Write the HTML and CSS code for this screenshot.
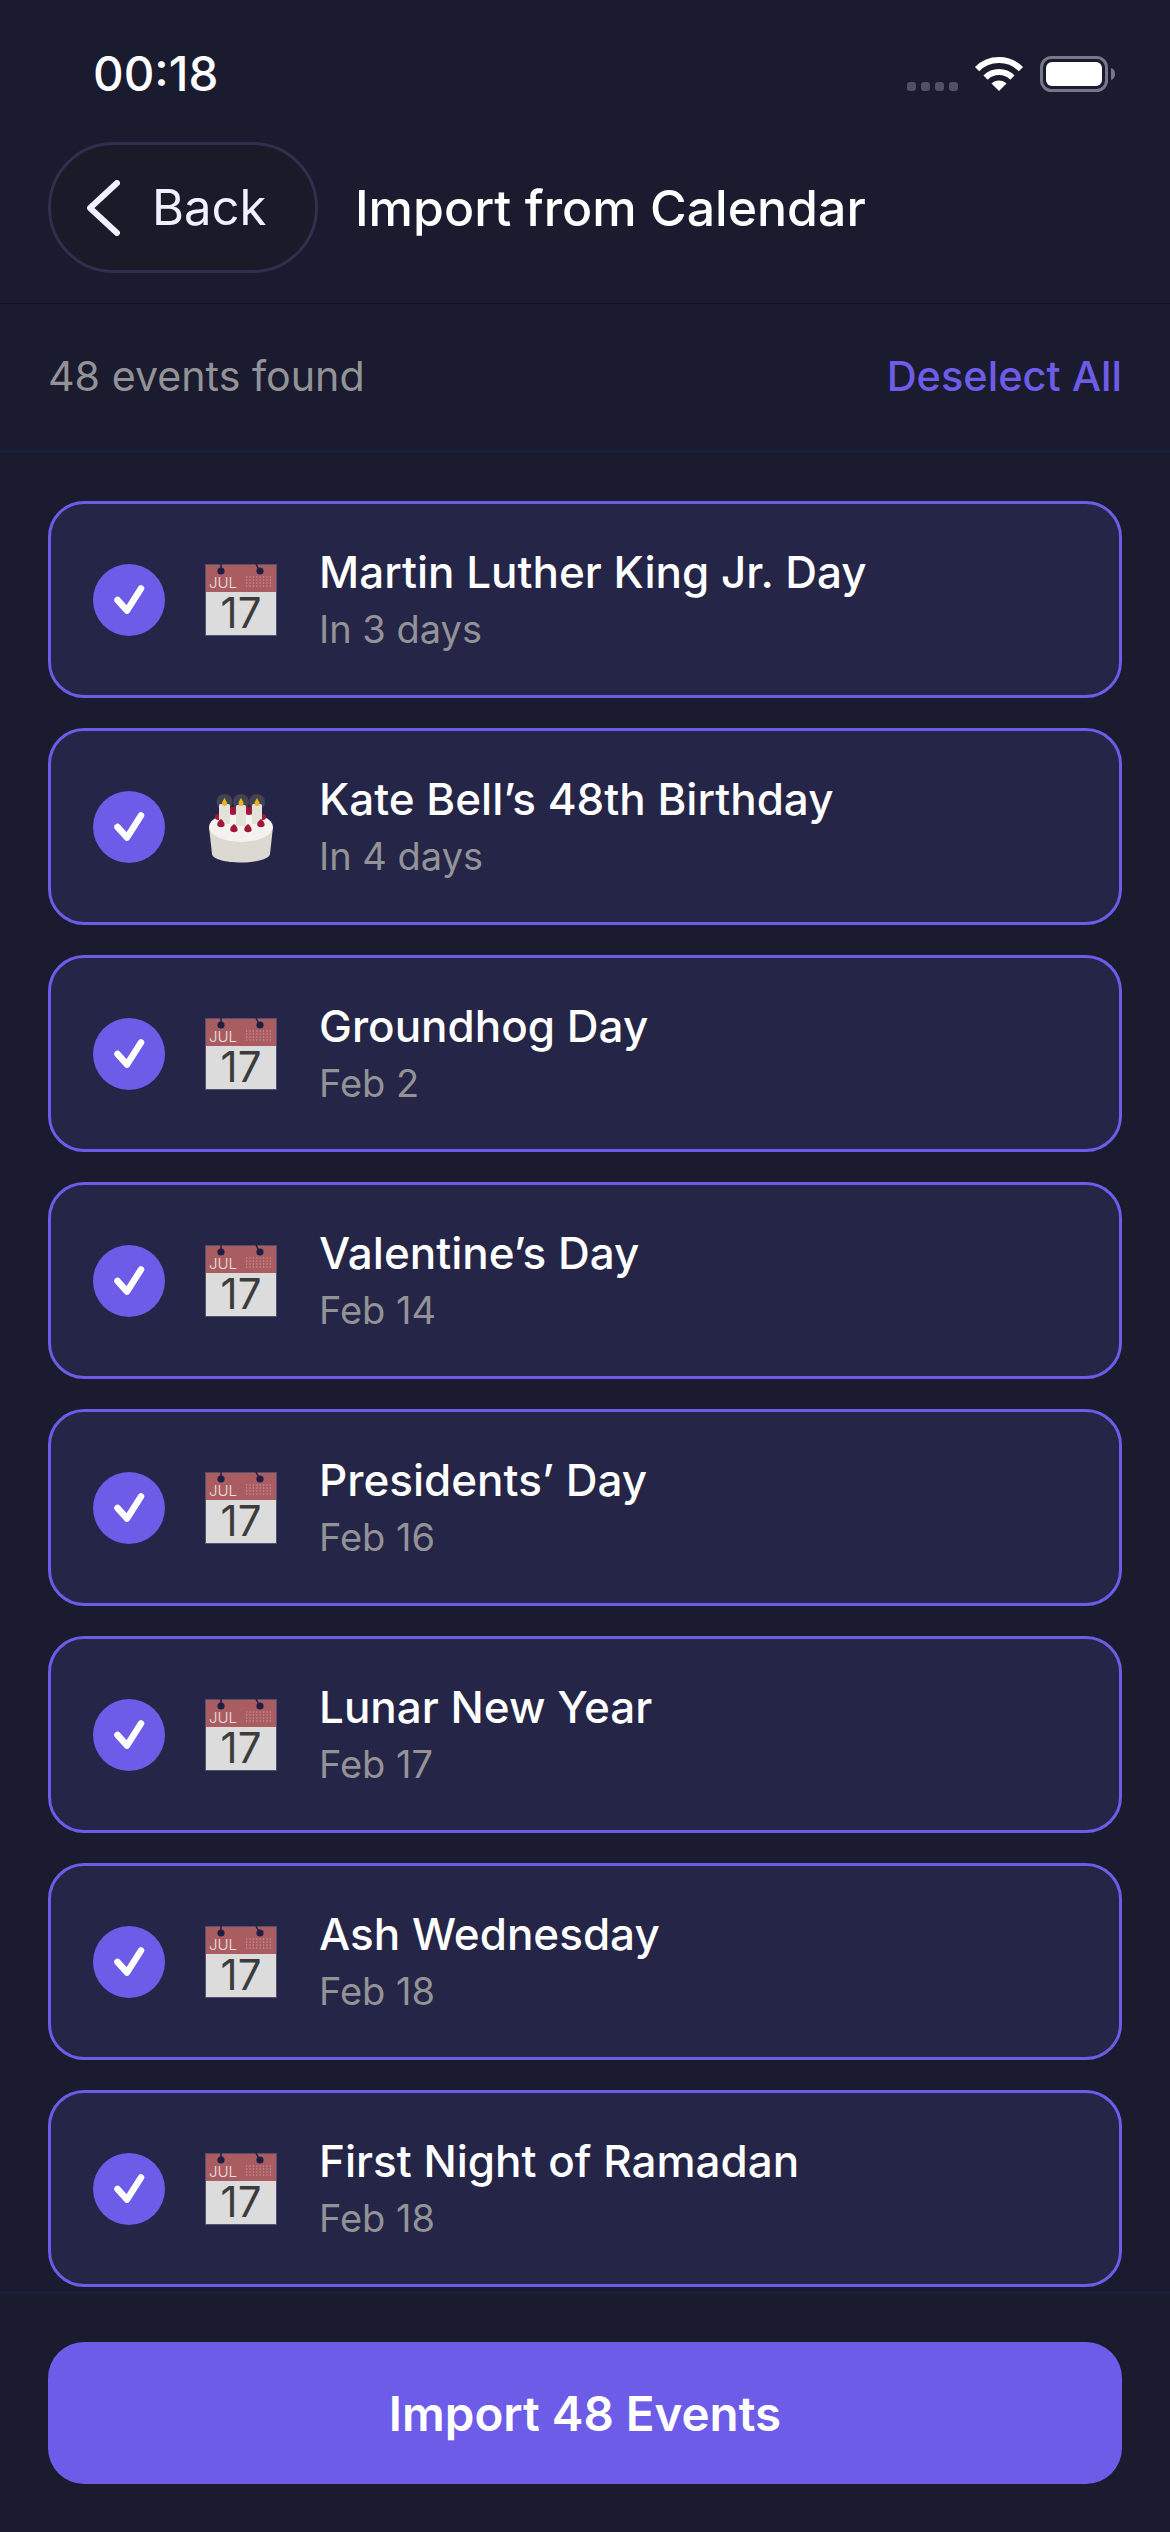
FILE: index.html
```html
<!DOCTYPE html>
<html lang="en">
<head>
    <meta charset="UTF-8">
    <meta name="viewport" content="width=device-width, initial-scale=1.0">
    <title>Import from Calendar</title>
    <link rel="stylesheet" href="styles.css">
</head>
<body>
    <svg class="defs" width="0" height="0">
        <symbol id="calendar" viewBox="0 0 72 72">
            <rect width="72" height="72" fill="#dcdcdc"/>
            <rect width="72" height="28" fill="#a95d61"/>
            <rect x="0.5" y="0.5" width="71" height="71" fill="none" stroke="#55506e"/>
            <path d="M16 0v6M51 0l3 6" stroke="#1e1e46" stroke-width="1.5"/>
            <circle cx="16" cy="7" r="3.6" fill="#1e1e46"/>
            <circle cx="55" cy="7" r="3.6" fill="#1e1e46"/>
            <path d="M41 13h27M41 16h27M41 19h27M41 22h27" stroke="#d9a3a5" stroke-width="1.2" stroke-dasharray="1.2 2.2"/>
        </symbol>
        <symbol id="cake" viewBox="0 0 72 72">
            <circle cx="19.500" cy="11" r="8" fill="#8f8a6a" opacity=".3"/>
            <circle cx="36" cy="11" r="8" fill="#8f8a6a" opacity=".3"/>
            <circle cx="52" cy="11" r="8" fill="#8f8a6a" opacity=".3"/>
            <path d="M4 36l3 27c.5 5 14 8.500 29 8.500s28.500-3.500 29-8.500l3-27z" fill="#dcd9d3"/>
            <ellipse cx="36" cy="36" rx="32" ry="15" fill="#f3f2ef"/>
            <g fill="#a3153a">
                <circle cx="28" cy="20" r="4"/>
                <circle cx="44" cy="20" r="4"/>
                <circle cx="13" cy="26" r="3"/>
                <circle cx="58" cy="26" r="3"/>
            </g>
            <rect x="14" y="13" width="11" height="20" rx="1.500" fill="#e4e2d6"/>
            <rect x="31" y="14" width="10" height="21" rx="1.500" fill="#e4e2d6"/>
            <rect x="47" y="13" width="10" height="20" rx="1.500" fill="#e4e2d6"/>
            <path d="M19.500 7c1.500 2.500 2.500 4 2.500 5.500a2.500 2.500 0 0 1-5 0c0-1.500 1-3 2.500-5.500zM36 7c1.500 2.500 2.500 4 2.500 5.500a2.500 2.500 0 0 1-5 0c0-1.500 1-3 2.500-5.500zM52 7c1.500 2.500 2.500 4 2.500 5.500a2.500 2.500 0 0 1-5 0c0-1.500 1-3 2.500-5.500z" fill="#e8b422"/>
            <path d="M16 28c2.500 2 4 4.500 3.500 6.500s-6 2.500-7 0 1-4.500 3.500-6.500zM29 33c2.500 2 4 4.500 3.500 6.500s-6 2.500-7 0 1-4.500 3.500-6.500zM43 33c2.500 2 4 4.500 3.500 6.500s-6 2.500-7 0 1-4.500 3.500-6.500zM56 28c2.500 2 4 4.500 3.500 6.500s-6 2.500-7 0 1-4.500 3.500-6.500z" fill="#a3153a"/>
        </symbol>
        <symbol id="check" viewBox="0 0 72 72">
            <circle cx="36" cy="36" r="36" fill="#6c5ce7"/>
            <path d="M24.500 36l9.500 10.500 14-22" fill="none" stroke="#fff" stroke-width="6.500" stroke-linecap="round" stroke-linejoin="round"/>
        </symbol>
    </svg>

    <div class="screen">
        <div class="status-bar">
            <span class="time">00:18</span>
            <svg class="status-icons" width="208" height="40" viewBox="0 0 208 40">
                <g fill="#515163">
                    <rect x="0" y="28" width="9" height="9" rx="3"/>
                    <rect x="14" y="28" width="9" height="9" rx="3"/>
                    <rect x="28" y="28" width="9" height="9" rx="3"/>
                    <rect x="42" y="28" width="9" height="9" rx="3"/>
                </g>
                <path d="M70.100 15.100A31 31 0 0 1 113.900 15.100M78.600 23.600A19 19 0 0 1 105.400 23.600" fill="none" stroke="#fff" stroke-width="6"/>
                <path d="M92 37L84.500 29.500A10.600 10.600 0 0 1 99.500 29.500Z" fill="#fff"/>
                <rect x="134.500" y="3.500" width="65" height="33" rx="10" fill="none" stroke="#77778a" stroke-width="3"/>
                <rect x="139" y="8" width="56" height="24" rx="6" fill="#fff"/>
                <path d="M204 14c2.500 .5 4 3 4 6s-1.500 5.500-4 6z" fill="#77778a"/>
            </svg>
        </div>

        <header class="top-bar">
            <button class="back-btn" type="button">
                <svg width="33" height="56" viewBox="0 0 33 56"><path d="M30 3L3 28l27 25" fill="none" stroke="#f0f0ff" stroke-width="6" stroke-linecap="round" stroke-linejoin="round"/></svg>
                <span>Back</span>
            </button>
            <h1>Import from Calendar</h1>
        </header>

        <div class="toolbar">
            <span class="count">48 events found</span>
            <span class="deselect">Deselect All</span>
        </div>

        <main class="event-list">
            <div class="event">
                <svg class="tick"><use href="#check"/></svg>
                <svg class="emoji" viewBox="0 0 72 72"><use href="#calendar"/><text class="cal-month" x="4" y="24">JUL</text><text class="cal-day" x="36" y="64">17</text></svg>
                <div class="event-text"><div class="event-name">Martin Luther King Jr. Day</div><div class="event-date">In 3 days</div></div>
            </div>
            <div class="event">
                <svg class="tick"><use href="#check"/></svg>
                <svg class="emoji"><use href="#cake"/></svg>
                <div class="event-text"><div class="event-name">Kate Bell’s 48th Birthday</div><div class="event-date">In 4 days</div></div>
            </div>
            <div class="event">
                <svg class="tick"><use href="#check"/></svg>
                <svg class="emoji" viewBox="0 0 72 72"><use href="#calendar"/><text class="cal-month" x="4" y="24">JUL</text><text class="cal-day" x="36" y="64">17</text></svg>
                <div class="event-text"><div class="event-name">Groundhog Day</div><div class="event-date">Feb 2</div></div>
            </div>
            <div class="event">
                <svg class="tick"><use href="#check"/></svg>
                <svg class="emoji" viewBox="0 0 72 72"><use href="#calendar"/><text class="cal-month" x="4" y="24">JUL</text><text class="cal-day" x="36" y="64">17</text></svg>
                <div class="event-text"><div class="event-name">Valentine’s Day</div><div class="event-date">Feb 14</div></div>
            </div>
            <div class="event">
                <svg class="tick"><use href="#check"/></svg>
                <svg class="emoji" viewBox="0 0 72 72"><use href="#calendar"/><text class="cal-month" x="4" y="24">JUL</text><text class="cal-day" x="36" y="64">17</text></svg>
                <div class="event-text"><div class="event-name">Presidents’ Day</div><div class="event-date">Feb 16</div></div>
            </div>
            <div class="event">
                <svg class="tick"><use href="#check"/></svg>
                <svg class="emoji" viewBox="0 0 72 72"><use href="#calendar"/><text class="cal-month" x="4" y="24">JUL</text><text class="cal-day" x="36" y="64">17</text></svg>
                <div class="event-text"><div class="event-name">Lunar New Year</div><div class="event-date">Feb 17</div></div>
            </div>
            <div class="event">
                <svg class="tick"><use href="#check"/></svg>
                <svg class="emoji" viewBox="0 0 72 72"><use href="#calendar"/><text class="cal-month" x="4" y="24">JUL</text><text class="cal-day" x="36" y="64">17</text></svg>
                <div class="event-text"><div class="event-name">Ash Wednesday</div><div class="event-date">Feb 18</div></div>
            </div>
            <div class="event">
                <svg class="tick"><use href="#check"/></svg>
                <svg class="emoji" viewBox="0 0 72 72"><use href="#calendar"/><text class="cal-month" x="4" y="24">JUL</text><text class="cal-day" x="36" y="64">17</text></svg>
                <div class="event-text"><div class="event-name">First Night of Ramadan</div><div class="event-date">Feb 18</div></div>
            </div>
        </main>

        <footer class="bottom-bar">
            <button class="import-btn" type="button">Import 48 Events</button>
        </footer>
    </div>
</body>
</html>
```

FILE: styles.css
```css
* {
    box-sizing: border-box;
}

body {
    margin: 0;
    background-color: #1a1b2e;
    color: #fff;
    font-family: Inter, "Noto Sans", sans-serif;
}

.defs {
    position: absolute;
}

.screen {
    height: 2532px;
    display: flex;
    flex-direction: column;
    overflow: hidden;
}

.status-bar {
    height: 142px;
    padding: 6px 55px 0 93px;
    display: flex;
    justify-content: space-between;
    align-items: center;
}

.time {
    font-size: 47.500px;
    font-weight: 500;
    line-height: 1;
}

.top-bar {
    height: 162px;
    padding: 0 48px 30px;
    display: flex;
    align-items: center;
    gap: 37px;
    border-bottom: 1px solid #12131f;
}

.top-bar h1 {
    margin: 0;
    font-size: 50px;
    font-weight: 500;
}

.back-btn {
    width: 270px;
    height: 131px;
    padding: 0 0 0 36px;
    display: flex;
    align-items: center;
    gap: 32px;
    background-color: #1a1a29;
    border: 3px solid #2f3050;
    border-radius: 66px;
    color: #f0f0ff;
    font-family: inherit;
    font-size: 49px;
}

.toolbar {
    height: 149px;
    padding: 0 48px 2px;
    display: flex;
    justify-content: space-between;
    align-items: center;
    border-bottom: 3px solid #18223f;
}

.count {
    font-size: 41.200px;
    color: #939397;
}

.deselect {
    font-size: 41.500px;
    color: #6c5ce7;
    font-weight: 500;
}

.event-list {
    flex: 1;
    padding: 48px 48px 0;
    display: flex;
    flex-direction: column;
    gap: 30px;
    overflow: hidden;
}

.event {
    flex: none;
    height: 197px;
    padding: 0 42px;
    display: flex;
    align-items: center;
    background-color: #252547;
    border: 3px solid #6c5ce7;
    border-radius: 36px;
}

.tick,
.emoji {
    flex: none;
    width: 72px;
    height: 72px;
}

.emoji {
    margin-left: 40px;
    overflow: visible;
}

.event-text {
    margin-left: 42px;
    padding-bottom: 3px;
}

.event-name {
    font-size: 44px;
    font-weight: 450;
    line-height: 54px;
}

.event-date {
    margin-top: 7px;
    font-size: 38px;
    line-height: 46px;
    color: #939397;
}

.cal-month {
    font-family: Inter, sans-serif;
    font-size: 15px;
    font-weight: 300;
    fill: #eee0e0;
}

.cal-day {
    font-family: Inter, sans-serif;
    font-size: 42px;
    fill: #3c3c3c;
    text-anchor: middle;
}

.bottom-bar {
    padding: 48px;
    border-top: 3px solid #18223f;
}

.import-btn {
    width: 100%;
    height: 142px;
    background-color: #6c5ce7;
    border: none;
    border-radius: 36px;
    color: #fff;
    font-family: inherit;
    font-size: 47.500px;
    font-weight: 600;
}
```
